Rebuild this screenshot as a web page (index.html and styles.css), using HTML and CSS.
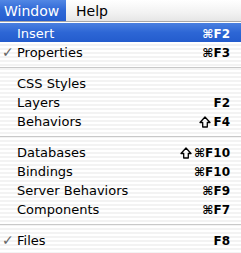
FILE: index.html
```html
<!DOCTYPE html>
<html lang="en">
<head>
    <meta charset="UTF-8">
    <title>Window menu</title>
    <link rel="stylesheet" href="styles.css">
</head>
<body>
    <div class="menuBar">
        <span class="barItem active">Window</span>
        <span class="barItem">Help</span>
    </div>
    <div class="menu">
        <div class="row selected"><span class="label">Insert</span><span class="key">&#8984;F2</span></div>
        <div class="row"><span class="check">&#10003;</span><span class="label">Properties</span><span class="key">&#8984;F3</span></div>
        <div class="sep"></div>
        <div class="row"><span class="label">CSS Styles</span><span class="key"></span></div>
        <div class="row"><span class="label">Layers</span><span class="key">F2</span></div>
        <div class="row"><span class="label">Behaviors</span><span class="key"><svg class="shift" viewBox="0 0 12 12"><path d="M6 1 L11 6.5 H8.3 V11 H3.7 V6.5 H1 Z"/></svg>F4</span></div>
        <div class="sep"></div>
        <div class="row"><span class="label">Databases</span><span class="key"><svg class="shift" viewBox="0 0 12 12"><path d="M6 1 L11 6.5 H8.3 V11 H3.7 V6.5 H1 Z"/></svg>&#8984;F10</span></div>
        <div class="row"><span class="label">Bindings</span><span class="key">&#8984;F10</span></div>
        <div class="row"><span class="label">Server Behaviors</span><span class="key">&#8984;F9</span></div>
        <div class="row"><span class="label">Components</span><span class="key">&#8984;F7</span></div>
        <div class="sep"></div>
        <div class="row"><span class="check">&#10003;</span><span class="label">Files</span><span class="key">F8</span></div>
    </div>
</body>
</html>
```

FILE: styles.css
```css
body {
    margin: 0;
    width: 241px;
    height: 253px;
    overflow: hidden;
    font-family: "DejaVu Sans", "Liberation Sans", sans-serif;
    font-size: 13px;
    color: #000;
    background: #fff;
}
.menuBar {
    display: flex;
    height: 21px;
    border-bottom: 1px solid #a8a8a8;
    background: linear-gradient(#ffffff, #f2f2f2 60%, #e6e6e6);
}
.barItem {
    display: flex;
    align-items: center;
    padding: 1px 11px 0 10px;
    font-size: 14px;
}
.barItem.active {
    padding: 1px 8px 0 4px;
    width: 54px;
    color: #fff;
    background: linear-gradient(#5287e4, #2f68d6 50%, #255dcf);
}
.menu {
    padding-top: 1px;
    background: repeating-linear-gradient(#ffffff 0 2px, #f3f3f3 2px 4px);
    height: 231px;
}
.row {
    position: relative;
    display: flex;
    justify-content: space-between;
    align-items: center;
    height: 19px;
    padding: 2px 11px 0 17px;
    box-sizing: border-box;
}
.row.selected {
    color: #fff;
    background: linear-gradient(#4a80e0, #2d66d5 50%, #245ccd);
}
.check {
    position: absolute;
    left: 2px;
    top: 2px;
    color: #666;
    font-size: 14px;
}
.key {
    display: flex;
    align-items: center;
    font-size: 12px;
    font-weight: bold;
}
.shift {
    width: 12px;
    height: 12px;
    margin-right: 2px;
    fill: none;
    stroke: #000;
    stroke-width: 1.3;
    stroke-linejoin: round;
}
.sep {
    height: 12px;
    display: flex;
    align-items: center;
}
.sep::before {
    content: "";
    flex: 1;
    height: 1px;
    background: #c9c9c9;
}
```
